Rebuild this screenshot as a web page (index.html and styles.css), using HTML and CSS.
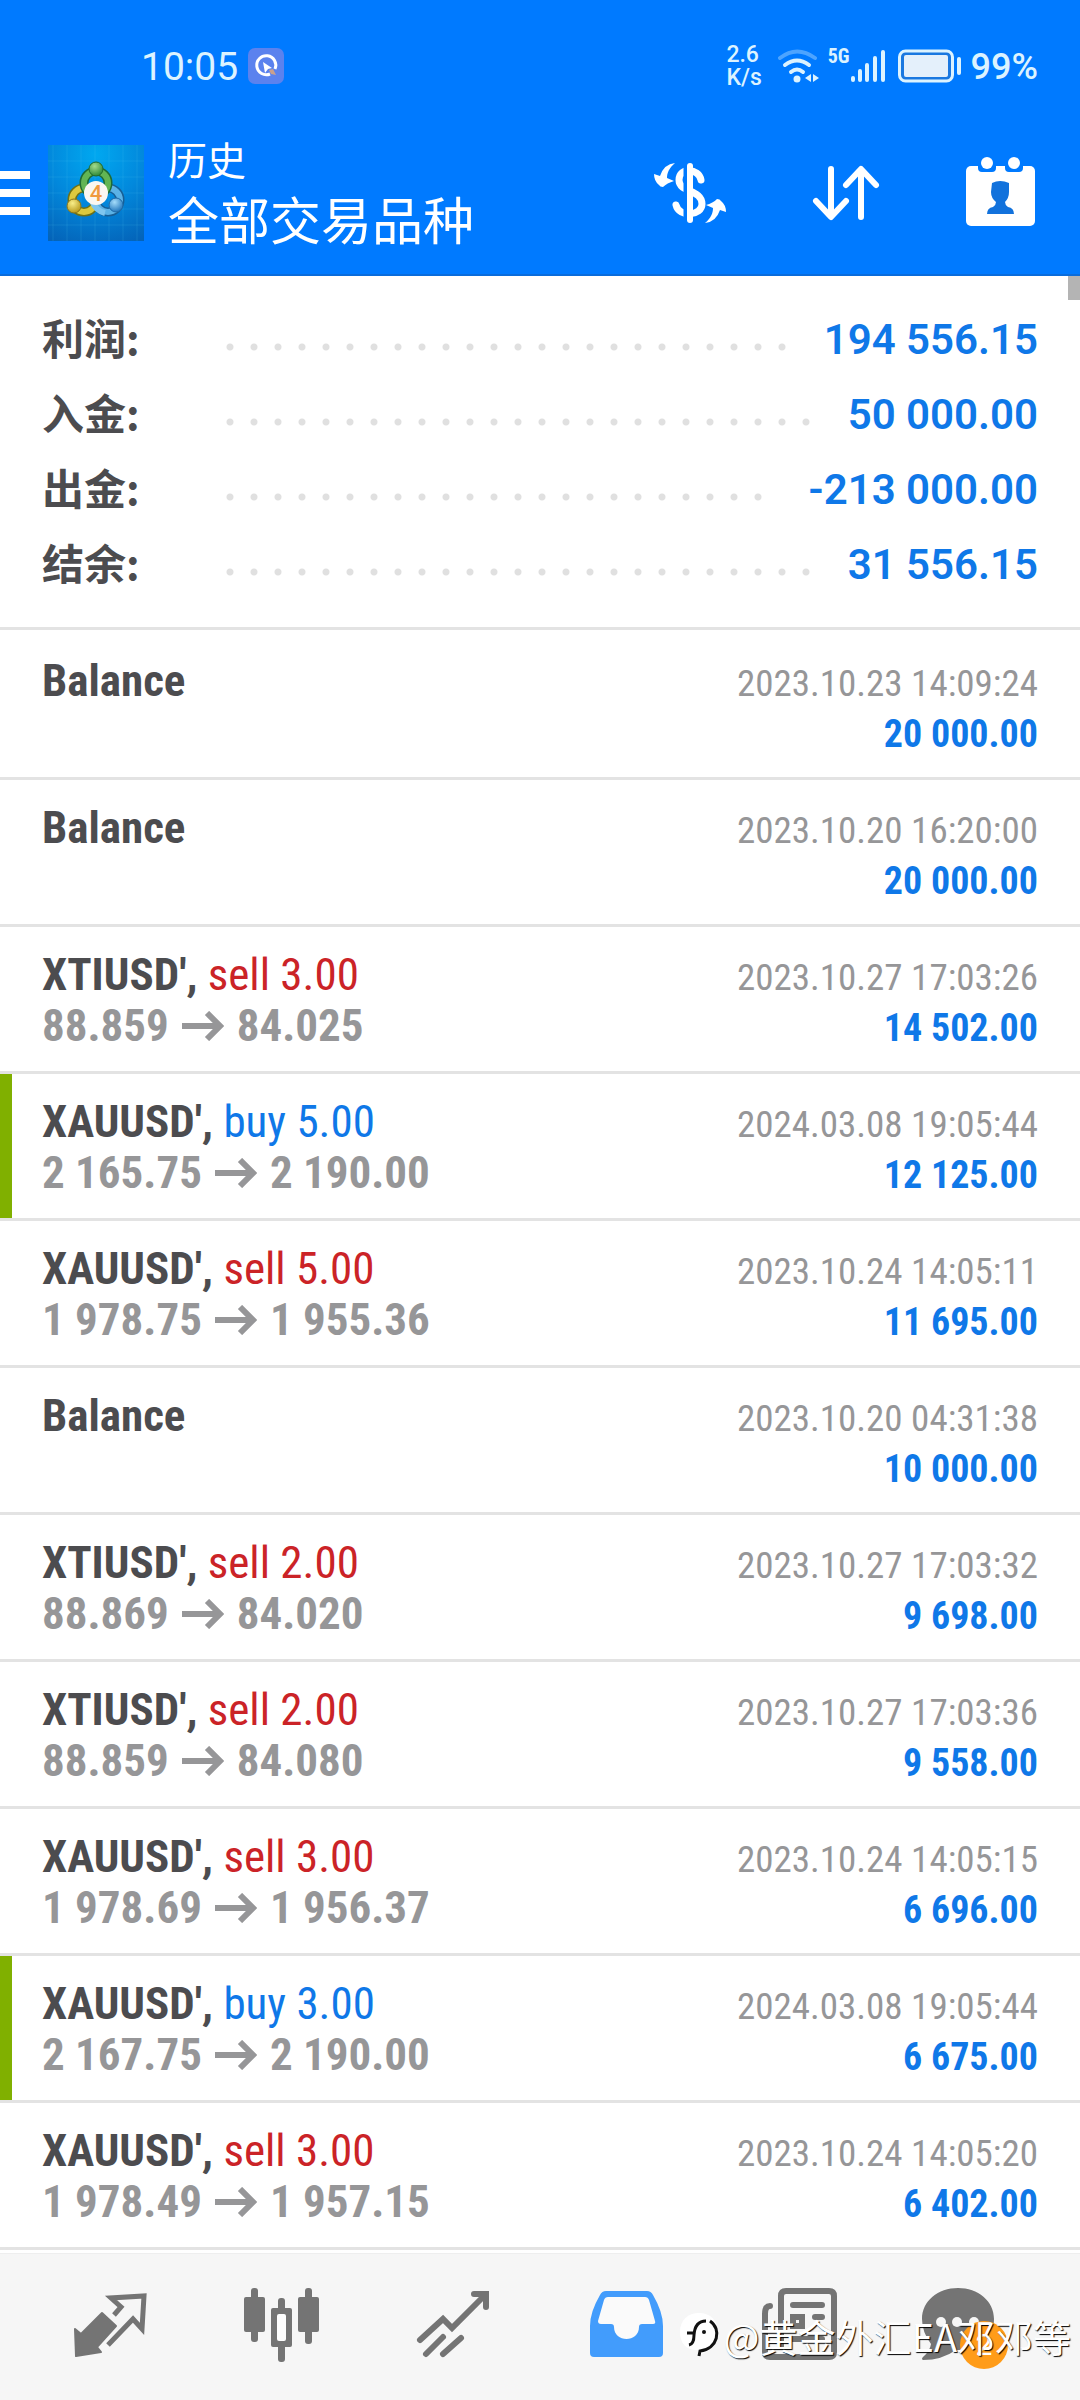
FILE: index.html
```html
<!DOCTYPE html>
<html lang="zh-CN">
<head>
<meta charset="utf-8">
<meta name="viewport" content="width=device-width, initial-scale=1">
<title>历史</title>
<link rel="stylesheet" href="styles.css">
</head>
<body>
<div class="app">
  <header class="header">
    <div class="status">
      <span class="clock">10:05</span>
      <svg class="status-app" width="36" height="36" viewBox="0 0 36 36" aria-hidden="true">
        <rect width="36" height="36" rx="7" fill="#5b82ee"/>
        <path d="M22 26A9.500 9.500 0 1 1 27 21" fill="none" stroke="#fff" stroke-width="3"/>
        <path d="M15 14l9 6-4 1-3 4z" fill="#fff"/>
        <path d="M21 22l4-1 3 6-5-1z" fill="#c9a08e"/>
      </svg>
      <span class="speed"><span>2.6</span><span>K/s</span></span>
      <svg class="wifi" width="42" height="34" viewBox="0 0 42 34" fill="none" stroke="#dcf3ff" stroke-linecap="round" stroke-width="4" aria-hidden="true">
        <path d="M2 9Q19 -4 37 9" opacity=".35"/>
        <path d="M7 16Q19 7 31 16"/>
        <path d="M13 23Q19 18 25 23"/>
        <circle cx="19" cy="30" r="3.500" fill="#dcf3ff" stroke="none"/>
        <path d="M33 25v8l-6-4zM35 25l6 4-6 4z" fill="#dcf3ff" stroke="none"/>
      </svg>
      <span class="network">5G</span>
      <svg class="signal" width="36" height="34" viewBox="0 0 36 34" stroke="#dcf3ff" stroke-linecap="round" stroke-width="4" aria-hidden="true">
        <path d="M3 29v2M10 22v9M17 16v15M25 9v22M33 3v28"/>
      </svg>
      <svg class="battery" width="63" height="34" viewBox="0 0 63 34" aria-hidden="true">
        <rect x="1.500" y="2" width="53" height="30" rx="6" fill="#1a78e0" stroke="#dcf3ff" stroke-width="3"/>
        <rect x="6" y="6" width="44" height="22" rx="2" fill="#e4f0fb"/>
        <rect x="59" y="8" width="4" height="18" rx="2" fill="#dcf3ff"/>
      </svg>
      <span class="percent">99%</span>
    </div>
    <div class="appbar">
      <button class="menu" aria-label="菜单"><span></span><span></span><span></span></button>
      <svg class="logo" width="96" height="96" viewBox="0 0 96 96" aria-hidden="true">
        <defs>
          <radialGradient id="sky" cx=".5" cy=".1" r="1"><stop offset="0" stop-color="#00a8f0"/><stop offset=".5" stop-color="#0288dc"/><stop offset="1" stop-color="#0463b8"/></radialGradient>
          <radialGradient id="green" cx=".4" cy=".3" r=".7"><stop offset="0" stop-color="#a5dc8c"/><stop offset="1" stop-color="#2f8a3a"/></radialGradient>
          <radialGradient id="gold" cx=".4" cy=".3" r=".7"><stop offset="0" stop-color="#f8ee8a"/><stop offset="1" stop-color="#b89a1c"/></radialGradient>
          <radialGradient id="blue" cx=".4" cy=".3" r=".7"><stop offset="0" stop-color="#a4dcfa"/><stop offset="1" stop-color="#2277bd"/></radialGradient>
        </defs>
        <rect width="96" height="96" fill="url(#sky)"/>
        <path d="M5 0v96M19 0v96M33 0v96M47 0v96M61 0v96M75 0v96M89 0v96M0 16h96M0 32h96M0 48h96M0 64h96M0 80h96" stroke="#5cc4f5" stroke-opacity=".16"/>
        <g fill="none">
          <circle cx="36" cy="55" r="12" stroke="#6d7118" stroke-width="9"/>
          <circle cx="36" cy="55" r="12" stroke="#dcc93e" stroke-width="6"/>
          <circle cx="60" cy="55" r="12" stroke="#175f96" stroke-width="9"/>
          <circle cx="60" cy="55" r="12" stroke="#5bb2e6" stroke-width="6"/>
          <circle cx="48" cy="38" r="12" stroke="#1f6b35" stroke-width="9"/>
          <circle cx="48" cy="38" r="12" stroke="#62b553" stroke-width="6"/>
          <path d="M44 56q4 10 13 12" stroke="#7fc6ef" stroke-width="6"/>
        </g>
        <circle cx="48" cy="24" r="7" fill="url(#green)" stroke="#246a2d"/>
        <circle cx="26" cy="61" r="7" fill="url(#gold)" stroke="#8a7519"/>
        <circle cx="68" cy="60" r="7" fill="url(#blue)" stroke="#1d6aa8"/>
        <circle cx="48" cy="48" r="12" fill="#faf7f2"/>
        <text class="logo-digit" x="48" y="56" text-anchor="middle">4</text>
      </svg>
      <div class="titles">
        <h1 class="title">历史</h1>
        <p class="subtitle">全部交易品种</p>
      </div>
      <div class="actions">
        <button class="icon-button" aria-label="交易品种">
          <svg width="72" height="72" viewBox="0 0 72 72" aria-hidden="true">
            <path d="M47 23C45 11 25 10 25 23C25 36 48 32 48 47C48 59 25 61 22 48" fill="none" stroke="#fff" stroke-width="7" stroke-linecap="round"/>
            <path d="M31.500 4v64" stroke="#007aff" stroke-width="4"/>
            <path d="M36 9v54" stroke="#fff" stroke-width="6" stroke-linecap="round"/>
            <path d="M21 6C15 11 13 16 13 21L20 24Q13 26 9 30Q6 30 5 28Q0 24 0 17L6 19Q10 7 21 6Z" fill="#fff"/>
            <path d="M21 6C15 11 13 16 13 21L20 24Q13 26 9 30Q6 30 5 28Q0 24 0 17L6 19Q10 7 21 6Z" fill="#fff" transform="rotate(180 36 36)"/>
          </svg>
        </button>
        <button class="icon-button" aria-label="排序">
          <svg width="72" height="72" viewBox="0 0 72 72" fill="none" stroke="#fff" stroke-width="6" stroke-linecap="round" stroke-linejoin="round" aria-hidden="true">
            <path d="M21 12v47M6 44l15 16 15-16M51 60V13M36 28l15-16 15 16"/>
          </svg>
        </button>
        <button class="icon-button" aria-label="日期">
          <svg width="72" height="72" viewBox="0 0 72 72" aria-hidden="true">
            <rect y="9" width="69" height="60" rx="5" fill="#fff"/>
            <path d="M12 8h18v3q0 4-4 4H16q-4 0-4-4zM39 8h18v3q0 4-4 4H43q-4 0-4-4z" fill="#007aff"/>
            <circle cx="21" cy="6" r="6" fill="#fff"/><circle cx="48" cy="6" r="6" fill="#fff"/>
            <path d="M26 26Q34 22 43 26L43 35Q43 41 39 45Q39 48 42 50Q48 51 48 57H21Q21 51 27 50Q30 48 30 45Q25 41 25 35Z" fill="#1272dc"/>
          </svg>
        </button>
      </div>
    </div>
  </header>

  <main class="content">
    <dl class="summary">
      <div class="total"><dt>利润:</dt><dd>194 556.15</dd></div>
      <div class="total"><dt>入金:</dt><dd>50 000.00</dd></div>
      <div class="total"><dt>出金:</dt><dd>-213 000.00</dd></div>
      <div class="total"><dt>结余:</dt><dd>31 556.15</dd></div>
    </dl>
    <svg class="symbols" aria-hidden="true">
      <symbol id="arrow" viewBox="0 0 42 30"><path d="M0 15h38M25 2l13 13-13 13" fill="none" stroke="#969698" stroke-width="6"/></symbol>
    </svg>
    <ul class="deals">
      <li class="deal">
        <div class="what"><p><b>Balance</b></p></div>
        <div class="when"><time>2023.10.23 14:09:24</time><strong>20 000.00</strong></div>
      </li>
      <li class="deal">
        <div class="what"><p><b>Balance</b></p></div>
        <div class="when"><time>2023.10.20 16:20:00</time><strong>20 000.00</strong></div>
      </li>
      <li class="deal">
        <div class="what"><p><b>XTIUSD',</b> <span class="sell">sell 3.00</span></p><p class="price">88.859<svg class="arrow"><use href="#arrow"/></svg>84.025</p></div>
        <div class="when"><time>2023.10.27 17:03:26</time><strong>14 502.00</strong></div>
      </li>
      <li class="deal marked">
        <div class="what"><p><b>XAUUSD',</b> <span class="buy">buy 5.00</span></p><p class="price">2 165.75<svg class="arrow"><use href="#arrow"/></svg>2 190.00</p></div>
        <div class="when"><time>2024.03.08 19:05:44</time><strong>12 125.00</strong></div>
      </li>
      <li class="deal">
        <div class="what"><p><b>XAUUSD',</b> <span class="sell">sell 5.00</span></p><p class="price">1 978.75<svg class="arrow"><use href="#arrow"/></svg>1 955.36</p></div>
        <div class="when"><time>2023.10.24 14:05:11</time><strong>11 695.00</strong></div>
      </li>
      <li class="deal">
        <div class="what"><p><b>Balance</b></p></div>
        <div class="when"><time>2023.10.20 04:31:38</time><strong>10 000.00</strong></div>
      </li>
      <li class="deal">
        <div class="what"><p><b>XTIUSD',</b> <span class="sell">sell 2.00</span></p><p class="price">88.869<svg class="arrow"><use href="#arrow"/></svg>84.020</p></div>
        <div class="when"><time>2023.10.27 17:03:32</time><strong>9 698.00</strong></div>
      </li>
      <li class="deal">
        <div class="what"><p><b>XTIUSD',</b> <span class="sell">sell 2.00</span></p><p class="price">88.859<svg class="arrow"><use href="#arrow"/></svg>84.080</p></div>
        <div class="when"><time>2023.10.27 17:03:36</time><strong>9 558.00</strong></div>
      </li>
      <li class="deal">
        <div class="what"><p><b>XAUUSD',</b> <span class="sell">sell 3.00</span></p><p class="price">1 978.69<svg class="arrow"><use href="#arrow"/></svg>1 956.37</p></div>
        <div class="when"><time>2023.10.24 14:05:15</time><strong>6 696.00</strong></div>
      </li>
      <li class="deal marked">
        <div class="what"><p><b>XAUUSD',</b> <span class="buy">buy 3.00</span></p><p class="price">2 167.75<svg class="arrow"><use href="#arrow"/></svg>2 190.00</p></div>
        <div class="when"><time>2024.03.08 19:05:44</time><strong>6 675.00</strong></div>
      </li>
      <li class="deal">
        <div class="what"><p><b>XAUUSD',</b> <span class="sell">sell 3.00</span></p><p class="price">1 978.49<svg class="arrow"><use href="#arrow"/></svg>1 957.15</p></div>
        <div class="when"><time>2023.10.24 14:05:20</time><strong>6 402.00</strong></div>
      </li>
    </ul>
    <div class="scroll-thumb"></div>
  </main>

  <nav class="tabs">
    <button class="tab" aria-label="行情">
      <svg width="78" height="78" viewBox="0 0 78 78" aria-hidden="true">
        <path d="M4 41L10 46L31 25L45 38L26 59L30 64L5 68Z" fill="#747474" stroke="#747474" stroke-width="2" stroke-linejoin="round"/>
        <path d="M43 27L50 19L40 10L73 8L71 41L62 31L37 57" fill="none" stroke="#747474" stroke-width="5"/>
      </svg>
    </button>
    <button class="tab" aria-label="图表">
      <svg width="78" height="78" viewBox="0 0 78 78" aria-hidden="true">
        <g fill="#747474"><rect x="1" y="9" width="21" height="35" rx="2"/><rect x="8" width="7" height="54" rx="3"/>
        <rect x="55" y="9" width="21" height="35" rx="2"/><rect x="62" width="7" height="56" rx="3"/>
        <rect x="28" y="20" width="21" height="39" rx="2"/><rect x="35" y="10" width="7" height="64" rx="3"/></g>
        <rect x="34" y="26" width="9" height="27" rx="2" fill="#fdfdfd"/>
      </svg>
    </button>
    <button class="tab" aria-label="交易">
      <svg width="78" height="78" viewBox="0 0 78 78" fill="none" stroke="#747474" stroke-width="6" stroke-linecap="round" aria-hidden="true">
        <path d="M5 52L28 31L37 40L70 7M59 6H71V19M28 49L11 66M46 50L28 66"/>
      </svg>
    </button>
    <button class="tab" aria-label="历史" aria-current="page">
      <svg width="78" height="78" viewBox="0 0 78 78" aria-hidden="true">
        <path d="M19 3H60Q64 3 66 7Q76 24 76 38V65Q76 69 72 69H7Q3 69 3 65V38Q3 24 13 7Q15 3 19 3Z" fill="#429cfc"/>
        <path d="M21 9H58Q61 9 62 12L68 33Q69 36 66 36H55Q52 36 52 39C52 55 27 55 27 39Q27 36 24 36H14Q11 36 11 33L17 12Q18 9 21 9Z" fill="#fafafa"/>
      </svg>
    </button>
    <button class="tab" aria-label="新闻">
      <svg width="78" height="78" viewBox="0 0 78 78" fill="none" stroke="#747474" stroke-width="6" stroke-linecap="round" aria-hidden="true">
        <path d="M22 8Q22 3 27 3H70Q75 3 75 8V64Q75 69 70 69H11Q6 69 6 64V26Q6 18 11 18M22 8V58"/>
        <path d="M34 17H63M56 29H63M33 51H63"/>
        <rect x="34" y="29" width="9" height="9"/>
      </svg>
    </button>
    <button class="tab" aria-label="信箱">
      <span class="chat">
        <svg width="100" height="78" viewBox="0 0 100 78" aria-hidden="true">
          <path d="M38 0C58 0 74 13 74 31C74 51 58 63 36 62Q22 72 3 72Q1 71 3 69Q10 63 11 56Q2 44 2 31C2 13 18 0 38 0Z" fill="#747474"/>
          <g fill="#f6f6f6"><circle cx="21" cy="34" r="5"/><circle cx="37" cy="34" r="5"/><circle cx="54" cy="34" r="5"/></g>
        </svg>
        <span class="badge">2</span>
      </span>
    </button>
    <div class="watermark">
      <svg width="40" height="46" viewBox="0 0 40 46" aria-hidden="true">
        <path d="M19 0C31 0 38 8 38 19C38 31 32 37 20 42L19 37C7 38 0 31 0 19C0 7 8 0 19 0Z" fill="#fff"/>
        <path d="M9 32Q14 31 14 22Q15 8 26 8M7 20H15" fill="none" stroke="#111" stroke-width="3"/>
        <circle cx="24" cy="19" r="2" fill="#111"/>
        <path d="M30 8C42 16 38 36 20 38L19 43" fill="none" stroke="#111" stroke-width="3"/>
      </svg>
      <span>@黄金外汇EA邓邓等</span>
    </div>
  </nav>
</div>
</body>
</html>
```
FILE: styles.css
```css
* {
  box-sizing: border-box;
}

body,
h1,
p,
ul,
dl,
dd {
  margin: 0;
  padding: 0;
}

body {
  background: #fff;
  color: #4c4c4f;
  font-family: Roboto, "Noto Sans CJK SC", sans-serif;
}

button {
  border: 0;
  padding: 0;
  background: none;
  font: inherit;
  cursor: pointer;
}

svg {
  display: block;
  flex: none;
}

.app {
  display: flex;
  flex-direction: column;
  min-height: 100vh;
}

/* Header */
.header {
  background: #007aff;
  border-bottom: 2px solid #0a6cdb;
  color: #fff;
}

.status {
  display: flex;
  align-items: center;
  padding: 42px 42px 0 141px;
  height: 90px;
  color: #dcf3ff;
}

.clock {
  padding-top: 2px;
  font-size: 39px;
}

.status-app {
  margin-left: 10px;
}

.speed {
  display: flex;
  flex-direction: column;
  margin-left: auto;
  font-size: 23px;
  font-weight: 500;
  line-height: 23px;
}

.wifi {
  margin-left: 16px;
}

.network {
  align-self: flex-start;
  margin-left: 8px;
  font: bold 20px/28px "Roboto Condensed", Roboto, sans-serif;
}

.battery {
  margin-left: 12px;
}

.percent {
  padding-top: 2px;
  margin-left: 10px;
  font-size: 36px;
  font-weight: 500;
}

.appbar {
  display: flex;
  align-items: center;
  padding: 42px 42px 20px 0;
  height: 184px;
}

.menu {
  display: flex;
  flex-direction: column;
  gap: 10px;
  width: 30px;
  margin-right: 18px;
}

.menu span {
  height: 8px;
  background: #fff;
}

.logo-digit {
  font: 500 22px Roboto, sans-serif;
  fill: #f09a3e;
}

.titles {
  margin-left: 24px;
  padding-bottom: 10px;
  font-family: "Noto Sans CJK SC", sans-serif;
}

.title {
  font-size: 39px;
  font-weight: 400;
  line-height: 60px;
}

.subtitle {
  font-size: 51px;
  line-height: 60px;
}

.actions {
  display: flex;
  gap: 84px;
  margin-left: auto;
}

/* Totals */
.content {
  position: relative;
  flex: 1;
}

.scroll-thumb {
  position: absolute;
  top: 0;
  right: 0;
  width: 12px;
  height: 24px;
  background: #b4b4b4;
}

.summary {
  padding: 26px 42px 25px;
  border-bottom: 3px solid #e3e3e3;
}

.total {
  display: flex;
  align-items: center;
  height: 75px;
}

.total dt {
  width: 176px;
  padding-bottom: 6px;
  font: bold 42px/60px "Noto Sans CJK SC", sans-serif;
}

.total::after {
  content: "";
  order: 1;
  flex: 1;
  height: 8px;
  margin: 14px 32px 0 0;
  background: radial-gradient(circle, #e0e0e0 3px, transparent 4px) 0 0 / 24px 8px;
}

.total dd {
  order: 2;
  color: #0f78e8;
  font-size: 42px;
  font-weight: 600;
}

/* Deals */
.symbols {
  width: 0;
  height: 0;
  position: absolute;
}

.deals {
  padding-top: 3px;
  list-style: none;
  font-family: "Roboto Condensed", Roboto, sans-serif;
}

.deal {
  display: flex;
  justify-content: space-between;
  min-height: 147px;
  padding: 22px 42px 0;
  border-bottom: 3px solid #e3e3e3;
  line-height: 51px;
}

.marked {
  background: linear-gradient(#80b000, #80b000) 0 0 / 12px 100% no-repeat;
}

.what {
  font-size: 45px;
}

.price {
  display: flex;
  align-items: center;
  color: #969698;
  font-weight: 700;
}

.arrow {
  width: 42px;
  height: 30px;
  margin: 0 13px;
}

.sell {
  color: #cb2327;
}

.buy {
  color: #0f78e8;
}

.when {
  display: flex;
  flex-direction: column;
  align-items: flex-end;
  padding-top: 3px;
  color: #969698;
  font-size: 37px;
}

.when strong {
  color: #0f78e8;
  font-size: 38px;
}

/* Bottom tabs */
.tabs {
  position: relative;
  display: grid;
  grid-template-columns: repeat(6, 1fr);
  height: 147px;
  padding: 0 24px;
  border-top: 1px solid #eee;
  background: #f6f6f6;
}

.tab {
  display: flex;
  align-items: center;
  justify-content: center;
}

.chat {
  position: relative;
}

.badge {
  position: absolute;
  top: 33px;
  left: 40px;
  width: 48px;
  height: 48px;
  border-radius: 50%;
  background: #ff9c19;
  color: #fff;
  font-size: 30px;
  line-height: 48px;
  text-align: center;
}

.watermark {
  position: absolute;
  right: 9px;
  bottom: 36px;
  display: flex;
  align-items: center;
  gap: 4px;
  color: #fff;
  font: 400 38px/56px "Noto Sans CJK SC", sans-serif;
  text-shadow: 1px 1px 1px #000;
  white-space: nowrap;
}
```
